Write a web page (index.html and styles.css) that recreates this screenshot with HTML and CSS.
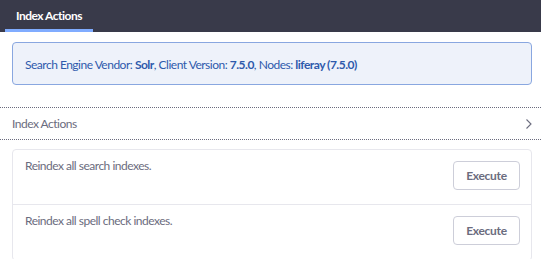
FILE: index.html
```html
<!DOCTYPE html>
<html>
<head>
<meta charset="utf-8">
<link rel="stylesheet" href="styles.css">
</head>
<body>
<nav class="navbar">
  <div class="tab active">Index Actions</div>
</nav>
<main class="content">
  <div class="alert"><span>Search Engine Vendor: <strong>Solr</strong>, Client Version: <strong>7.5.0</strong>, Nodes: <strong>liferay (7.5.0)</strong></span></div>
  <div class="panel-header">
    <span class="panel-title">Index Actions</span>
    <svg class="chevron" width="8" height="12" viewBox="0 0 8 12"><path d="M1.5 1.5 L6 6 L1.5 10.5" fill="none" stroke="#6b6c7e" stroke-width="1.1"/></svg>
  </div>
  <div class="card">
    <div class="row">
      <span class="row-text">Reindex all search indexes.</span>
      <button class="btn">Execute</button>
    </div>
    <div class="row">
      <span class="row-text">Reindex all spell check indexes.</span>
      <button class="btn">Execute</button>
    </div>
  </div>
</main>
</body>
</html>
```
FILE: styles.css
```css
html, body {
  margin: 0;
  padding: 0;
  background: #fff;
  font-family: Lato, "Noto Sans", sans-serif;
  font-size: 12px;
  letter-spacing: -0.5px;
  color: #6b6c7e;
}
.navbar {
  background: #393a4a;
  height: 32px;
  padding-left: 5px;
  display: flex;
}
.tab {
  width: 88px;
  box-sizing: border-box;
  color: #fff;
  font-weight: 700;
  display: flex;
  align-items: center;
  justify-content: center;
  border-bottom: 3px solid #80acff;
  padding-top: 1px;
}
.content {
  padding-top: 10px;
}
.alert {
  margin: 0 9px 0 12px;
  height: 43px;
  box-sizing: border-box;
  border: 1px solid #89a7e0;
  border-radius: 4px;
  background: #eef2fa;
  color: #2e5aac;
  display: flex;
  align-items: center;
  padding: 1px 12px 0;
}
.alert strong {
  font-weight: 700;
}
.panel-header {
  margin-top: 22px;
  height: 33px;
  box-sizing: border-box;
  border-top: 1px dotted #6b6c7e;
  border-bottom: 1px dotted #6b6c7e;
  display: flex;
  align-items: center;
  justify-content: space-between;
  padding: 0 8px 0 12px;
}
.chevron {
  display: block;
}
.card {
  margin: 9px 9px 0 12px;
  border: 1px solid #e7e7ed;
  border-radius: 4px;
}
.row {
  display: flex;
  justify-content: space-between;
  align-items: flex-start;
  padding: 6px 11px 14px 12px;
  border-bottom: 1px solid #e7e7ed;
}
.row-text {
  line-height: 20px;
}
.btn {
  margin-top: 5px;
  width: 67px;
  height: 29px;
  border: 1px solid #cdced9;
  border-radius: 4px;
  background: #fff;
  color: #6b6c7e;
  font-family: inherit;
  font-size: 12px;
  letter-spacing: -0.3px;
  font-weight: 700;
  padding: 0;
}
```
